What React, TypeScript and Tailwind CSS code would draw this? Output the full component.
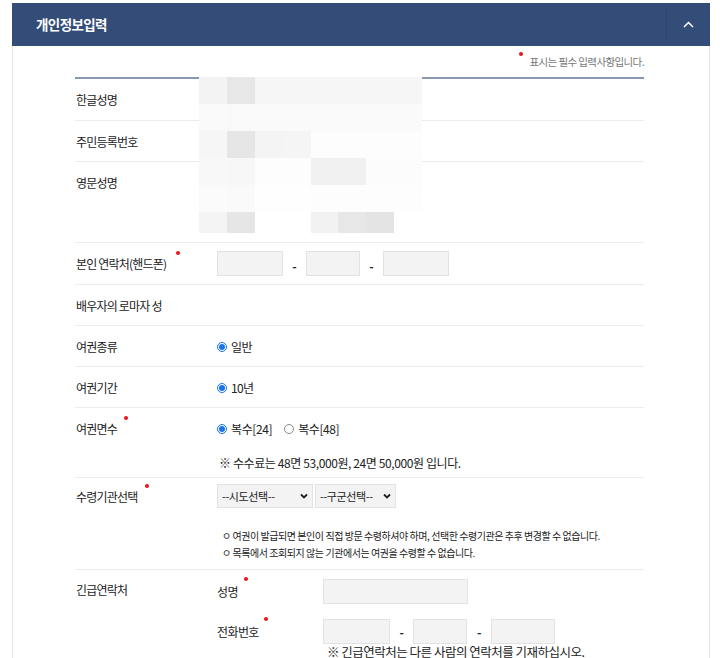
import React from 'react';

// 개인정보입력 panel – passport application form

const mosaic: string[][] = [
  ['#f3f3f4', '#e7e7e8', '#f6f6f7', '#f6f6f7', '#f6f6f7', '#f6f6f7', '#f6f6f7', '#f6f6f7'],
  ['#fafafa', '#f9f9f9', '#fafafa', '#fafafa', '#fafafa', '#fafafa', '#fafafa', '#fafafa'],
  ['#f6f6f6', '#e6e6e6', '#f4f4f4', '#f5f5f5', '#fdfdfd', '#fdfdfd', '#fdfdfd', '#fdfdfd'],
  ['#f8f8f8', '#f7f7f7', '#fdfdfd', '#fdfdfd', '#f1f1f1', '#f1f1f1', '#fcfcfc', '#fcfcfc'],
  ['#fbfbfb', '#fafafa', '#fefefe', '#fefefe', '#fdfdfd', '#fdfdfd', '#fdfdfd', '#fdfdfd'],
  ['#f4f4f4', '#e6e6e6', '#ffffff', '#ffffff', '#f2f2f2', '#e7e7e7', '#e4e4e4', '#ffffff'],
];

function Dot() {
  return <span className="inline-block w-[4px] h-[4px] rounded-full bg-[#e8141b] self-start" />;
}

function Radio({ checked }: { checked?: boolean }) {
  return checked ? (
    <span className="inline-flex items-center justify-center w-[10px] h-[10px] rounded-full border border-[#1a73e8] bg-white">
      <span className="w-[6px] h-[6px] rounded-full bg-[#1a73e8]" />
    </span>
  ) : (
    <span className="inline-block w-[10px] h-[10px] rounded-full border border-[#8a8a8a] bg-white" />
  );
}

function Box({ w }: { w: string }) {
  return <div className={`${w} h-[25px] bg-[#f3f3f3] border border-[#e2e2e2]`} />;
}

function Dash() {
  return <span className="text-[12px] font-bold text-[#222]">-</span>;
}

function Caret() {
  return (
    <svg width="8" height="6" viewBox="0 0 8 6" className="shrink-0">
      <polyline points="1,1.5 4,4.5 7,1.5" fill="none" stroke="#222" strokeWidth="1.8" />
    </svg>
  );
}

function Row({
  label,
  children,
  dot,
  dotGap = 'ml-[9px]',
  className = '',
  labelPad = 'pt-[12px]',
}: {
  label: string;
  children?: React.ReactNode;
  dot?: boolean;
  dotGap?: string;
  className?: string;
  labelPad?: string;
}) {
  return (
    <div className={`grid grid-cols-[141px_1fr] border-b border-[#ececec] ${className}`}>
      <div className={`${labelPad} pl-[1px]`}>
        <div className="flex leading-[17px] text-[12px] tracking-[-0.8px] text-[#222]">
          <span>{label}</span>
          {dot && <span className={`${dotGap} -mt-[4px] flex`}><Dot /></span>}
        </div>
      </div>
      <div>{children}</div>
    </div>
  );
}

export default function App() {
  return (
    <div className="w-[720px] h-[658px] overflow-hidden bg-white font-['Noto_Sans_CJK_KR','Noto_Sans',sans-serif] pt-[3px]">
      <div className="ml-[12px] w-[698px]">
        {/* header */}
        <div className="h-[43px] bg-[#344c78] flex items-center">
          <span className="pl-[24px] text-white font-bold text-[13.5px] tracking-[-0.6px] flex-1">개인정보입력</span>
          <div className="h-[30px] w-[44px] border-l border-[#2d4369] flex items-center justify-center">
            <svg width="11" height="7" viewBox="0 0 11 7">
              <polyline points="1,6 5.5,1.5 10,6" fill="none" stroke="#ffffff" strokeWidth="1.5" />
            </svg>
          </div>
        </div>

        {/* body */}
        <div className="border-x border-[#e4e4e4] pl-[62px] pr-[65px] pb-[40px]">
          <div className="h-[31px] flex items-center justify-end">
            <span className="flex items-start gap-[6px] text-[10.5px] tracking-[-0.6px] text-[#777]">
              <span className="-mt-[2px] flex"><Dot /></span>
              <span>표시는 필수 입력사항입니다.</span>
            </span>
          </div>

          <div className="relative border-t-2 border-[#8797b4]">
            <Row label="한글성명" className="h-[42px]" />
            <Row label="주민등록번호" className="h-[41px]" />
            <Row label="영문성명" className="h-[81px]" />

            <Row label="본인 연락처(핸드폰)" dot dotGap="ml-[10px]" className="h-[42px]">
              <div className="flex items-center pt-[8px] pl-[1px]">
                <Box w="w-[66px]" />
                <span className="w-[23px] text-center"><Dash /></span>
                <Box w="w-[54px]" />
                <span className="w-[23px] text-center"><Dash /></span>
                <Box w="w-[66px]" />
              </div>
            </Row>

            <Row label="배우자의 로마자 성" className="h-[41px]" />

            <Row label="여권종류" className="h-[41px]">
              <div className="flex items-center gap-[4px] pt-[12px] leading-[17px] text-[12px] tracking-[-0.6px] text-[#222] pl-[1px]">
                <Radio checked />
                <span>일반</span>
              </div>
            </Row>

            <Row label="여권기간" className="h-[41px]">
              <div className="flex items-center gap-[4px] pt-[12px] leading-[17px] text-[12px] tracking-[-0.6px] text-[#222] pl-[1px]">
                <Radio checked />
                <span>10년</span>
              </div>
            </Row>

            <Row label="여권면수" dot dotGap="ml-[7px]" className="h-[70px]">
              <div className="pt-[12px] leading-[17px] text-[12px] tracking-[-0.4px] text-[#222]">
                <div className="flex items-center pl-[1px]">
                  <Radio checked />
                  <span className="ml-[4px]">복수[24]</span>
                  <span className="ml-[12px] flex"><Radio /></span>
                  <span className="ml-[4px]">복수[48]</span>
                </div>
                <div className="mt-[17px] pl-[3px]">※ 수수료는 48면 53,000원, 24면 50,000원 입니다.</div>
              </div>
            </Row>

            <Row label="수령기관선택" dot dotGap="ml-[8px]" labelPad="pt-[10px]" className="h-[92px]">
              <div className="pt-[6px] pl-[1px]">
                <div className="flex gap-[2px]">
                  <div className="w-[96px] h-[24px] bg-[#f3f3f3] border border-[#e2e2e2] flex items-center justify-between px-[4px] text-[11px] tracking-[-0.4px] text-[#222]">
                    <span>--시도선택--</span>
                    <Caret />
                  </div>
                  <div className="w-[81px] h-[24px] bg-[#f3f3f3] border border-[#e2e2e2] flex items-center justify-between px-[4px] text-[11px] tracking-[-0.4px] text-[#222]">
                    <span>--구군선택--</span>
                    <Caret />
                  </div>
                </div>
                <div className="mt-[19px] pl-[5px] text-[10px] tracking-[-0.45px] leading-[17px] text-[#222]">
                  <div>ㅇ 여권이 발급되면 본인이 직접 방문 수령하셔야 하며, 선택한 수령기관은 추후 변경할 수 없습니다.</div>
                  <div>ㅇ 목록에서 조회되지 않는 기관에서는 여권을 수령할 수 없습니다.</div>
                </div>
              </div>
            </Row>

            <Row label="긴급연락처" labelPad="pt-[11px]" className="h-[120px] border-b-0">
              <div className="pt-[9px] pl-[1px] text-[12px] tracking-[-0.6px] text-[#222]">
                <div className="flex items-center">
                  <div className="w-[106px] flex">
                    <span className="leading-[17px]">성명</span>
                    <span className="ml-[6px] -mt-[6px] flex"><Dot /></span>
                  </div>
                  <Box w="w-[145px]" />
                </div>
                <div className="flex items-center mt-[15px]">
                  <div className="w-[106px] flex">
                    <span className="leading-[17px]">전화번호</span>
                    <span className="ml-[5px] -mt-[6px] flex"><Dot /></span>
                  </div>
                  <Box w="w-[67px]" />
                  <span className="w-[23px] text-center"><Dash /></span>
                  <Box w="w-[54px]" />
                  <span className="w-[24px] text-center"><Dash /></span>
                  <Box w="w-[64px]" />
                </div>
                <div className="pl-[110px] leading-[16px] text-[12.5px] tracking-[-0.5px]">※ 긴급연락처는 다른 사람의 연락처를 기재하십시오.</div>
              </div>
            </Row>

            {/* redaction mosaic over the personal data */}
            <div className="absolute left-[124px] top-[-2px] w-[223px]">
              {mosaic.map((row, r) => (
                <div key={r} className={`grid grid-cols-8 ${r === 5 ? 'h-[21px]' : 'h-[27px]'}`}>
                  {row.map((c, i) => (
                    <div key={i} style={{ backgroundColor: c }} />
                  ))}
                </div>
              ))}
            </div>
          </div>
        </div>
      </div>
    </div>
  );
}
